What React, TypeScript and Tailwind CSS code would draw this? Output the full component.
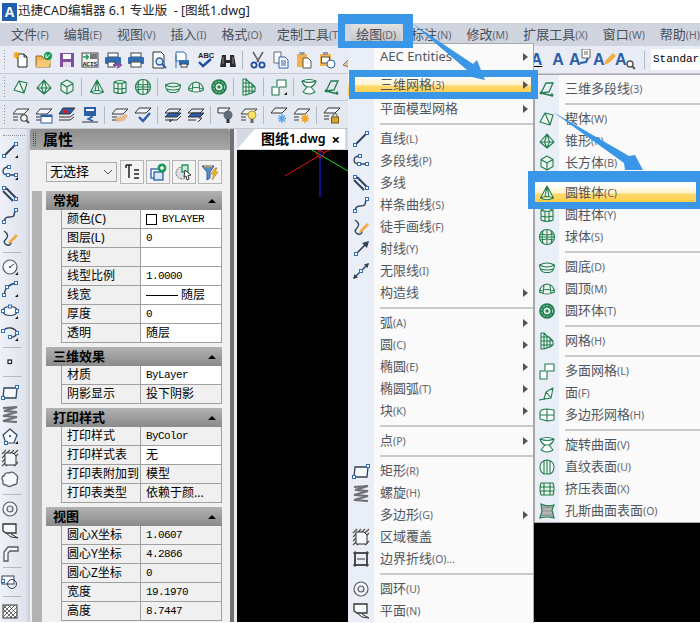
import React from 'react';

const grn = '#1f7d4d';
const ink = '#31425a';
const node = '#2f6db5';
const gry = '#555b66';

const N = ({ x, y }: { x: number; y: number }) => (
  <rect x={x - 1.5} y={y - 1.5} width="3" height="3" fill="#fff" stroke={node} strokeWidth="1" />
);
const Corner = () => <path d="M14 17h3v-3z" fill="#111" />;

// 三维 icons
const G = ({ d, fill = '#eef3ee' }: { d: string; fill?: string }) => (
  <path d={d} fill={fill} stroke={grn} strokeWidth="1.1" strokeLinejoin="round" />
);

// 图层 icon base: two stacked sheets
const Layers = ({ children }: { children?: React.ReactNode }) => (
  <>
    <path d="M5 3h12l-5 5H1z" fill="#f4f5f8" stroke="#3a3a3a" strokeWidth="1" />
    <path d="M1 11h5M1 14h5" stroke="#3a3a3a" strokeWidth="1" />
    {children}
  </>
);

const ICONS: Record<string, React.ReactNode> = {
  new: (
    <>
      <path d="M6 3h6l3 3v10H6z" fill="#fff" stroke="#222" />
      <path d="M12 3v3h3" fill="none" stroke="#222" />
      <path d="M1 4h7M4.500 1v7M2 1.500l5 5M7 1.500l-5 5" stroke="#f2a31d" strokeWidth="1.200" />
    </>
  ),
  open: (
    <>
      <path d="M1 5h6l1 2h7v9H1z" fill="#f2b04e" stroke="#8a6a30" />
      <path d="M1 16l2-7h13l-2 7z" fill="#f7c873" />
      <circle cx="13" cy="5" r="4.200" fill="#1d9a5a" />
      <path d="M11 3.500v3l2 0M12 6.500l3-3" stroke="#fff" fill="none" />
    </>
  ),
  save: (
    <>
      <rect x="2" y="2" width="14" height="14" fill="#7d4f9e" />
      <rect x="5" y="3" width="8" height="5" fill="#fff" />
      <rect x="5" y="11" width="8" height="5" fill="#e6dcef" />
    </>
  ),
  acis: (
    <>
      <rect x="1" y="2" width="16" height="14" fill="#f4f4f4" stroke="#444" />
      <rect x="9" y="3" width="7" height="5" fill="#777" />
      <path d="M2 6h5M5 3.500 7.500 6 5 8.500" stroke="#1d9a5a" fill="none" strokeWidth="1.400" />
      <text x="1.700" y="15" fontSize="6" fontWeight="700" fill="#222" fontFamily="Liberation Mono">ACIS</text>
    </>
  ),
  printto: (
    <>
      <rect x="4" y="2" width="10" height="4" fill="#fff" stroke="#444" />
      <rect x="1" y="6" width="16" height="7" rx="1" fill="#2f6db5" />
      <rect x="4" y="11" width="7" height="5" fill="#fff" stroke="#444" />
      <path d="M9 14h6M13 11l4 3-4 3" stroke="#7d4f9e" fill="none" strokeWidth="1.800" />
    </>
  ),
  print: (
    <>
      <rect x="4" y="2" width="10" height="4" fill="#fff" stroke="#444" />
      <rect x="1" y="6" width="16" height="7" rx="1" fill="#2f6db5" />
      <rect x="4" y="11" width="10" height="5" fill="#fff" stroke="#444" />
    </>
  ),
  preview: (
    <>
      <path d="M3 1h8l3 3v13H3z" fill="#fff" stroke="#333" />
      <circle cx="9.500" cy="10.500" r="3.500" fill="#d8e8f8" stroke="#2a5ea8" strokeWidth="1.400" />
      <path d="M12 13l4 4" stroke="#2a5ea8" strokeWidth="2" />
    </>
  ),
  setup: (
    <>
      <path d="M3 1h8l2 2v7H3z" fill="#fff" stroke="#2f6db5" />
      <path d="M3 4v13" stroke="#2f6db5" />
      <rect x="6" y="9" width="10" height="5" fill="#2f6db5" />
      <rect x="8" y="13" width="6" height="3" fill="#fff" stroke="#444" />
    </>
  ),
  spell: (
    <>
      <text x="2" y="7" fontSize="7.500" fontWeight="700" fill="#222" fontFamily="Liberation Sans">ABC</text>
      <path d="M3 11l4 4 8-7" stroke="#1e4f9e" strokeWidth="2.400" fill="none" />
    </>
  ),
  binoc: (
    <>
      <path d="M3 4h4v5h4V4h4l2 12h-6v-4H7v4H1z" fill="#2c2c2c" />
      <path d="M4 6v7M14 6v7" stroke="#888" />
    </>
  ),
  cut: (
    <>
      <path d="M4 1l6 10M14 1L8 11" stroke="#666" strokeWidth="1.600" />
      <circle cx="5" cy="14" r="2.600" fill="none" stroke="#1e4f9e" strokeWidth="1.800" />
      <circle cx="13" cy="14" r="2.600" fill="none" stroke="#1e4f9e" strokeWidth="1.800" />
    </>
  ),
  copy: (
    <>
      <path d="M2 1h7v11H2z" fill="#fff" stroke="#667" />
      <path d="M7 6h6l3 3v8H7z" fill="#fff" stroke="#2a5ea8" />
      <path d="M9 10h5M9 12h5M9 14h5" stroke="#2a5ea8" />
    </>
  ),
  paste: (
    <>
      <rect x="2" y="3" width="10" height="13" fill="#f2b04e" />
      <rect x="4.500" y="1" width="5" height="3" fill="#999" />
      <path d="M8 7h5l3 3v7H8z" fill="#fff" stroke="#555" />
    </>
  ),
  match: (
    <>
      <rect x="2" y="3" width="11" height="12" fill="#f2b04e" />
      <rect x="3.500" y="6" width="8" height="6" fill="#fff" stroke="#555" />
      <rect x="5" y="1" width="5" height="3" fill="#999" />
      <circle cx="13" cy="13" r="4" fill="#fff" stroke="#2a5ea8" />
    </>
  ),
  brush: <path d="M2 14l8-8 4 3-7 7z" fill="#d9c39a" stroke="#8a7a5a" />,

  wedge: <G d="M2 12 7 3l8 2-3 10zM2 12l10 3M7 3l5 12" />,
  pyramid: <G d="M9 2 2 10l7 6 7-6zM9 2 6.500 10 9 16M9 2l2.500 8L9 16M2 10h14" />,
  box: <G d="M9 2l6 3.500v7L9 16l-6-3.500v-7zM3 5.500 9 9l6-3.500M9 9v7" />,
  cone: <G d="M9 2 2.500 14Q9 17.500 15.500 14zM2.500 14Q9 11 15.500 14M9 2 7 13M9 2l2 11" />,
  cyl: <G d="M3 4q6-3 12 0v10q-6 3-12 0zM3 4q6 3 12 0M7 5v10M11 5v10M3 10q6 2 12 0" />,
  sphere: (
    <>
      <circle cx="9" cy="9" r="7.500" fill="#eef3ee" stroke={grn} strokeWidth="1.200" />
      <path d="M2 6q7 2 14 0M2 12q7-2 14 0M1.500 9h15M9 1.500v15M5 2.500q-2 6.500 0 13M13 2.500q2 6.500 0 13" fill="none" stroke={grn} />
    </>
  ),
  dish: <G d="M1.500 7Q9 3 16.500 7 16 14 11 14.500H7Q2 14 1.500 7zM1.500 7Q9 11 16.500 7M3 11q6 2 12 0" />,
  dome: <G d="M1.500 12Q2 5 9 4q7 1 7.500 8Q9 16 1.500 12zM1.500 11Q9 8 16.500 11M6 5 5 14M12 5l1 9" />,
  torus: (
    <>
      <circle cx="9" cy="9" r="7.800" fill={grn} />
      <circle cx="9" cy="9" r="5.500" fill="none" stroke="#bfe0cd" strokeDasharray="2 1.500" />
      <circle cx="9" cy="9" r="3" fill="#9fd0b4" stroke="#fff" />
      <circle cx="9" cy="9" r="1.300" fill={grn} />
    </>
  ),
  mesh: <G d="M3 1h3l3 3 3 2 3 3v4l-3 2-3 1-3 1H3zM6 1v16M9 4v12M12 6v9M3 5h9M3 9h12M3 13h12" fill="#f0f5f0" />,
  fmesh: (
    <>
      <G d="M2 9h7v8H2z" fill="#fff" />
      <G d="M7 9V2h9v7H9" fill="#fff" />
    </>
  ),
  fmeshc: (
    <>
      <G d="M2 9h7v8H2z" fill="#fff" />
      <G d="M7 9V2h9v7H9" fill="#fff" />
      <Corner />
    </>
  ),
  face: <G d="M1 16l5-1 2-7 7-4-2 10-7 1M8 8l5 6M1 16l12-2" fill="#fff" />,
  pmesh: <G d="M2 6q1-3 7-3l7 1v10l-7 1-7-2zM2 9h14M9 3v12" fill="#fff" />,
  rev: <G d="M2 3Q9 0 16 3q-1 4-5 6l4 5q-6 4-12 0l4-5Q3 7 2 3zM2 3q7 3 14 0M7 9h4" fill="#fff" />,
  poly3d: (
    <>
      <path d="M3 13 8 3h7l-4 9-8 1 12 3" fill="none" stroke={grn} strokeWidth="1.300" />
      <circle cx="3" cy="13" r="1.400" fill={grn} />
      <circle cx="14" cy="15" r="1.400" fill={grn} />
    </>
  ),
  ruled: <G d="M9 2q7 1 7 7 0 5-4 7H6Q2 14 2 9q0-6 7-7zM6 3v13M9 2v14M12 3v13" fill="#f4f8f4" />,
  extr: <G d="M3 3h12q2 6 0 12H3q-2-6 0-12zM6 3v12M12 3v12M2 7h14M2 11h14" fill="#e8f1ea" />,
  coons: (
    <>
      <path d="M3 2q6 3 13 1l-2 5 2 8q-7-2-14 0l2-7z" fill="#b4b8b8" stroke={grn} strokeWidth="1.200" />
      <path d="M4 6l10-1M4 9l10 0M3 13l11 0" stroke="#8c8c8c" />
    </>
  ),

  line: (
    <>
      <path d="M3 15 15 3" stroke={ink} strokeWidth="2" />
      <N x={3} y={15} />
      <N x={15} y={3} />
    </>
  ),
  linec: (
    <>
      <path d="M3 15 15 3" stroke={ink} strokeWidth="2" />
      <N x={3} y={15} />
      <N x={15} y={3} />
      <Corner />
    </>
  ),
  pline: (
    <>
      <path d="M8 4Q2 4 2 8t5 4h7" fill="none" stroke={ink} strokeWidth="1.300" />
      <N x={8} y={4} />
      <N x={7} y={12} />
      <N x={15} y={12} />
    </>
  ),
  plinec: (
    <>
      <path d="M8 4Q2 4 2 8t5 4h7" fill="none" stroke={ink} strokeWidth="1.300" />
      <N x={8} y={4} />
      <N x={7} y={12} />
      <N x={15} y={12} />
      <Corner />
    </>
  ),
  mline: (
    <>
      <path d="M2 6l10 10M5 3l10 10" stroke={ink} strokeWidth="2" />
      <N x={15} y={14} />
      <N x={3} y={3} />
    </>
  ),
  spline: (
    <>
      <path d="M3 16q0-6 5-6t5-2 2-5" fill="none" stroke={ink} strokeWidth="1.500" />
      <N x={3} y={15} />
      <N x={15} y={3} />
    </>
  ),
  free: (
    <>
      <path d="M3 2q6 4 2 8t1 6q4 1 4-3" fill="none" stroke={ink} strokeWidth="1.400" />
      <path d="M8 12l7-7 2 2-7 7-3 1z" fill="#f2ac45" />
    </>
  ),
  ray: (
    <>
      <path d="M4 14 14 4" stroke={ink} strokeWidth="1.600" />
      <path d="M17 1l-7 2 5 5z" fill={ink} />
      <N x={4} y={14} />
    </>
  ),
  xline: (
    <>
      <path d="M2 16 16 2" stroke={ink} strokeWidth="1.500" />
      <path d="M17 1l-5 1.500L15.500 6zM1 17l5-1.500L2.500 12z" fill={ink} />
      <N x={9} y={9} />
    </>
  ),
  circle: (
    <>
      <circle cx="9" cy="9" r="7" fill="#f8f9fc" stroke={gry} strokeWidth="1.200" />
      <path d="M9 9l4-3" stroke={ink} />
      <rect x="8" y="8" width="2" height="2" fill={node} />
      <Corner />
    </>
  ),
  arc: (
    <>
      <path d="M3 15Q4 5 15 3" fill="none" stroke={ink} strokeWidth="1.400" />
      <N x={3} y={15} />
      <N x={6} y={7} />
      <N x={15} y={3} />
      <Corner />
    </>
  ),
  ellipse: (
    <>
      <ellipse cx="9" cy="9" rx="7.500" ry="4.500" fill="#f8f9fc" stroke={ink} strokeWidth="1.200" />
      <N x={9} y={4.500} />
      <N x={2} y={9} />
      <N x={16} y={9} />
      <Corner />
    </>
  ),
  earc: (
    <>
      <path d="M2 7q3-4 8-3t6 5q-2 5-7 4" fill="none" stroke={ink} strokeWidth="1.300" />
      <N x={2} y={7} />
      <N x={16} y={9} />
      <N x={9} y={13} />
      <Corner />
    </>
  ),
  point: <rect x="7" y="7" width="3.500" height="3.500" fill="#fff" stroke="#222" strokeWidth="1.200" />,
  rect: (
    <>
      <path d="M3 5h13l-1 10H2z" fill="#f8f9fc" stroke={ink} strokeWidth="1.300" />
      <N x={16} y={4} />
      <N x={2} y={15} />
    </>
  ),
  helix: <path d="M2 3l14-1-13 4 13 1-14 4 14 1-14 4 14 1" fill="none" stroke="#6e7176" strokeWidth="2.200" />,
  polygon: (
    <>
      <path d="M9 2l7 6-3 8H5L2 8z" fill="#f8f9fc" stroke={ink} strokeWidth="1.200" />
      <rect x="8" y="8" width="2" height="2" fill={node} />
      <N x={5} y={16} />
      <Corner />
    </>
  ),
  wipe: (
    <>
      <path d="M1 5l4-4M1 9l8-8M1 13 13 1M1 17 17 1M5 17 17 5M13 17l4-4" stroke="#555" strokeWidth="1.300" />
      <path d="M4 4h8l3 3v9H4z" fill="#f4f6fb" stroke="#333" />
    </>
  ),
  bound: (
    <>
      <rect x="3" y="3" width="12" height="12" fill="none" stroke="#333" strokeWidth="1.400" />
      <path d="M1 3h16M1 15h16M3 1v16M15 1v16M5 9h8" stroke="#333" />
    </>
  ),
  cloud: <path d="M3 5q1-4 5-3 4-2 6 1 4 2 2 6 1 5-4 5-4 3-7 0-4 0-3-4-2-3 0-5z" fill="#f8f9fc" stroke={gry} strokeWidth="1.300" />,
  donut: (
    <>
      <circle cx="9" cy="9" r="7" fill="#f8f9fc" stroke={gry} strokeWidth="1.200" />
      <circle cx="9" cy="9" r="3" fill="#e8e8e8" stroke={gry} strokeWidth="1.200" />
    </>
  ),
  plane: (
    <>
      <path d="M2 2h13v9H5l-3-2z" fill="#f8f9fc" stroke="#333" strokeWidth="1.300" />
      <path d="M5 11l5 4 7 1-7-4" fill="none" stroke="#333" />
    </>
  ),
  pipe: <path d="M3 17V8l4-5h10v4H9L7 9v8z" fill="#f4f6fb" stroke={gry} strokeWidth="1.300" />,
  region: (
    <>
      <rect x="1" y="3" width="12" height="8" fill="#f8f9fc" stroke={ink} />
      <circle cx="11" cy="11" r="4.500" fill="none" stroke={ink} />
      <N x={2} y={8} />
    </>
  ),
  hatch: (
    <>
      <rect x="2" y="3" width="14" height="13" fill="#fff" stroke="#333" />
      <path d="M2 7l4-4M2 11l8-8M2 15 14 3M5 16 16 5M9 16l7-7M13 16l3-3M2 7l9 9M2 3l13 13M7 3l9 9" stroke="#444" strokeWidth=".8" />
    </>
  ),

  lfind: (
    <Layers>
      <circle cx="12" cy="12" r="3.200" fill="#fff" stroke="#555" strokeWidth="1.300" />
      <path d="M14 14l3 3" stroke="#555" strokeWidth="2" />
    </Layers>
  ),
  lwin: (
    <Layers>
      <rect x="6" y="9" width="11" height="8" fill="#fff" stroke="#2a5ea8" />
      <rect x="6" y="9" width="11" height="2" fill="#2a5ea8" />
    </Layers>
  ),
  lred: (
    <>
      <path d="M5 2h12l-5 6H1z" fill="#2a5ea8" stroke="#333" />
      <rect x="6" y="4" width="3" height="3" fill="#e31818" />
      <path d="M1 11h11l4-3M1 14h11l4-3" stroke="#333" fill="none" />
    </>
  ),
  lmon: (
    <>
      <rect x="3" y="1" width="12" height="9" fill="#2a5ea8" />
      <rect x="5" y="3" width="8" height="2" fill="#fff" />
      <path d="M8 8l3 3-4 2 5 2" stroke="#2a5ea8" strokeWidth="1.600" fill="none" />
      <path d="M1 16h16" stroke="#333" />
    </>
  ),
  lhand: (
    <Layers>
      <path d="M4 12l4-1 6-3 3 2-4 5-6 1z" fill="#e8b98a" />
    </Layers>
  ),
  lchk: (
    <>
      <path d="M5 2h12l-5 5H1z" fill="#f4f5f8" stroke="#333" />
      <path d="M5 11l4 4 7-8" stroke="#2a5ea8" strokeWidth="2.400" fill="none" />
    </>
  ),
  lprev: (
    <>
      <path d="M5 3h12l-4 4H1zM1 14h12l4-4" fill="none" stroke="#333" />
      <path d="M5 7h12l-4 4H1z" fill="#2a5ea8" stroke="#333" />
      <path d="M9 13l-3 3v-3" stroke="#333" fill="none" />
    </>
  ),
  lnext: (
    <>
      <path d="M5 3h12l-4 4H1zM1 14h8" fill="none" stroke="#333" />
      <path d="M5 7h12l-4 4H1z" fill="#2a5ea8" stroke="#333" />
      <path d="M11 16l4-4h-3" stroke="#333" fill="none" />
    </>
  ),
  lbulb0: (
    <>
      <path d="M1 2h12L9 7H1z" fill="#f4f5f8" stroke="#333" />
      <circle cx="11" cy="9" r="4.500" fill="#5f6b78" />
      <rect x="9.500" y="13" width="3" height="4" fill="#333" />
    </>
  ),
  lbulb1: (
    <Layers>
      <circle cx="12" cy="9" r="4" fill="#f8e26a" stroke="#b59a2d" />
      <rect x="10.500" y="13" width="3" height="4" fill="#666" />
    </Layers>
  ),
  lsnow: (
    <>
      <path d="M5 2h12l-5 5H1z" fill="#f4f5f8" stroke="#333" />
      <path d="M12 8v9M8 12.500h8M9 9.500l6 6M15 9.500l-6 6" stroke="#62a8e8" strokeWidth="1.500" />
    </>
  ),
  lsun: (
    <Layers>
      <path d="M12 8v9M8 12.500h8M9 9.500l6 6M15 9.500l-6 6" stroke="#f2a31d" strokeWidth="1.600" />
    </Layers>
  ),
  llock: (
    <>
      <path d="M5 2h12l-5 5H1zM1 10h5M1 13h5" fill="#f4f5f8" stroke="#333" />
      <path d="M10 11V9q2-3 4 0v2" fill="none" stroke="#777" strokeWidth="1.300" />
      <rect x="8.500" y="11" width="7" height="6" fill="#d9a52f" stroke="#7a5d17" />
    </>
  ),

  props1: <path d="M3 2h6M6 2v13M3 2v3M11 7h5M11 11h5M11 15h5" stroke="#222" strokeWidth="1.500" fill="none" />,
  props2: (
    <>
      <rect x="2" y="6" width="9" height="9" fill="#fff" stroke="#2a5ea8" strokeWidth="1.300" />
      <rect x="5" y="9" width="9" height="8" fill="#dbe6f4" stroke="#2a5ea8" strokeWidth="1.300" />
      <circle cx="13" cy="5" r="4.500" fill="#1d9a5a" />
      <path d="M11 5h4M13 3v4" stroke="#fff" strokeWidth="1.500" />
    </>
  ),
  props3: (
    <>
      <circle cx="7" cy="10" r="6" fill="#d8dde6" stroke="#667" strokeDasharray="2 1" />
      <path d="M7 2h6v7H7z" fill="#cfe6d8" stroke="#1d9a5a" strokeWidth="1.300" />
      <path d="M10 7l6 5-3 .5L14 16l-2 1-1-4-2 1z" fill="#fff" stroke="#333" />
    </>
  ),
  props4: (
    <>
      <path d="M1 3h12L9 9v6l-3 2V9z" fill="#5d8ec4" stroke="#2a5ea8" />
      <path d="M3 3.500h8" stroke="#e2a32d" strokeWidth="1.300" />
      <path d="M14 5l-4 6h3l-2 6 6-8h-3l2-4z" fill="#f2b62d" stroke="#a57a12" strokeWidth=".6" />
    </>
  ),
};

const Icon = ({ n, s = 18 }: { n: string; s?: number }) => (
  <svg width={s} height={s} viewBox="0 0 18 18" className="shrink-0">
    {ICONS[n]}
  </svg>
);

const Label = ({ t, k }: { t: string; k?: string }) => (
  <span className="whitespace-nowrap">
    {t}
    {k && <span className="text-[10.500px] text-[#5f6672]">{k}</span>}
  </span>
);

const hiRow = 'bg-[linear-gradient(to_bottom,#fff_12%,#fff2c9_50%,#ffd96e_54%,#ffcf48_90%)]';

const TOP_MENU: [string, string][] = [
  ['文件', '(F)'], ['编辑', '(E)'], ['视图', '(V)'], ['插入', '(I)'], ['格式', '(O)'], ['定制工具', '(T)'],
  ['绘图', '(D)'], ['标注', '(N)'], ['修改', '(M)'], ['扩展工具', '(X)'], ['窗口', '(W)'], ['帮助', '(H)'],
];

const Tb = ({ items }: { items: string[] }) => (
  <>
    {items.map((n, i) =>
      n === '|' ? (
        <div key={i} className="mx-[3px] h-[18px] w-px bg-[#b4b9c4]" />
      ) : (
        <div key={i} className="flex w-[23px] justify-center">
          <Icon n={n} />
        </div>
      ),
    )}
  </>
);

const HGrip = () => (
  <div className="mr-[2px] flex h-[22px] w-[3px] flex-col justify-between py-px">
    {[0, 1, 2, 3, 4, 5, 6].map((d) => (
      <div key={d} className="h-px w-px bg-[#8d929c]" />
    ))}
  </div>
);

const ROW1 = ['new', 'open', 'save', 'acis', 'printto', 'print', 'preview', 'setup', 'spell', 'binoc', '|', 'cut', 'copy', 'paste', 'match', 'brush'];
const ROW2 = ['wedge', 'pyramid', 'box', '|', 'cone', 'cyl', 'sphere', '|', 'dish', 'dome', 'torus', '|', 'mesh', '|', 'fmeshc', '|', 'rev', 'poly3d'];
const ROW3 = ['lfind', 'lwin', 'lred', 'lmon', '|', 'lhand', 'lchk', '|', 'lprev', 'lnext', '|', 'lbulb0', 'lbulb1', '|', 'lsnow', 'lsun', '|', 'llock'];

const LEFT = ['linec', 'plinec', 'mline', 'spline', 'free', '|', 'circle', 'arc', 'ellipse', 'earc', '|', 'point', '|', 'rect', 'helix', 'polygon', 'wipe', 'cloud', '|', 'donut', 'plane', 'pipe', '|', 'region', '|', 'hatch'];

type Prop = { k: string; v?: React.ReactNode; white?: boolean; mono?: boolean };

const SECTIONS: { title: string; rows: Prop[] }[] = [
  {
    title: '常规',
    rows: [
      {
        k: '颜色(C)',
        white: true,
        v: (
          <span className="flex items-center gap-[5px]">
            <span className="h-[11px] w-[11px] border border-black bg-white" />
            <span className="font-['Liberation_Mono',monospace] text-[11px] tracking-[-0.6px]">BYLAYER</span>
          </span>
        ),
      },
      { k: '图层(L)', v: '0', white: true, mono: true },
      { k: '线型', white: true },
      { k: '线型比例', v: '1.0000', white: true, mono: true },
      {
        k: '线宽',
        white: true,
        v: (
          <span className="flex items-center gap-[3px]">
            <span className="h-px w-[32px] bg-black" />
            随层
          </span>
        ),
      },
      { k: '厚度', v: '0', white: true, mono: true },
      { k: '透明', v: '随层', white: true },
    ],
  },
  {
    title: '三维效果',
    rows: [
      { k: '材质', v: 'ByLayer', white: true, mono: true },
      { k: '阴影显示', v: '投下阴影' },
    ],
  },
  {
    title: '打印样式',
    rows: [
      { k: '打印样式', v: 'ByColor', mono: true },
      { k: '打印样式表', v: '无', white: true },
      { k: '打印表附加到', v: '模型' },
      { k: '打印表类型', v: '依赖于颜...' },
    ],
  },
  {
    title: '视图',
    rows: [
      { k: '圆心X坐标', v: '1.0607', mono: true },
      { k: '圆心Y坐标', v: '4.2866', mono: true },
      { k: '圆心Z坐标', v: '0', mono: true },
      { k: '宽度', v: '19.1970', mono: true },
      { k: '高度', v: '8.7447', mono: true },
    ],
  },
];

type Item = { t?: string; k?: string; i?: string; sub?: boolean; hi?: boolean; sep?: boolean; sp?: number };

const MAIN: Item[] = [
  { t: 'AEC Entities', sub: true },
  { sp: 6 },
  { t: '三维网格', k: '(3)', sub: true, hi: true },
  { sp: 2 },
  { t: '平面模型网格', sub: true },
  { sep: true },
  { t: '直线', k: '(L)', i: 'line' },
  { t: '多段线', k: '(P)', i: 'pline' },
  { t: '多线', i: 'mline' },
  { t: '样条曲线', k: '(S)', i: 'spline' },
  { t: '徒手画线', k: '(F)', i: 'free' },
  { t: '射线', k: '(Y)', i: 'ray' },
  { t: '无限线', k: '(I)', i: 'xline' },
  { t: '构造线', sub: true },
  { sep: true },
  { t: '弧', k: '(A)', sub: true },
  { t: '圆', k: '(C)', sub: true },
  { t: '椭圆', k: '(E)', sub: true },
  { t: '椭圆弧', k: '(T)', sub: true },
  { t: '块', k: '(K)', sub: true },
  { sep: true },
  { t: '点', k: '(P)', sub: true },
  { sep: true },
  { t: '矩形', k: '(R)', i: 'rect' },
  { t: '螺旋', k: '(H)', i: 'helix' },
  { t: '多边形', k: '(G)', sub: true },
  { t: '区域覆盖', i: 'wipe' },
  { t: '边界折线', k: '(O)...', i: 'bound' },
  { sep: true },
  { t: '圆环', k: '(U)', i: 'donut' },
  { t: '平面', k: '(N)', i: 'plane' },
];

const SUB: Item[] = [
  { sp: 3 },
  { t: '三维多段线', k: '(3)', i: 'poly3d' },
  { sep: true },
  { t: '楔体', k: '(W)', i: 'wedge' },
  { t: '锥形', k: '(P)', i: 'pyramid' },
  { t: '长方体', k: '(B)', i: 'box' },
  { sep: true },
  { t: '圆锥体', k: '(C)', i: 'cone', hi: true },
  { t: '圆柱体', k: '(Y)', i: 'cyl' },
  { t: '球体', k: '(S)', i: 'sphere' },
  { sep: true },
  { t: '圆底', k: '(D)', i: 'dish' },
  { t: '圆顶', k: '(M)', i: 'dome' },
  { t: '圆环体', k: '(T)', i: 'torus' },
  { sep: true },
  { t: '网格', k: '(H)', i: 'mesh' },
  { sep: true },
  { t: '多面网格', k: '(L)', i: 'fmesh' },
  { t: '面', k: '(F)', i: 'face' },
  { t: '多边形网格', k: '(H)', i: 'pmesh' },
  { sep: true },
  { t: '旋转曲面', k: '(V)', i: 'rev' },
  { t: '直纹表面', k: '(U)', i: 'ruled' },
  { t: '挤压表面', k: '(X)', i: 'extr' },
  { t: '孔斯曲面表面', k: '(O)', i: 'coons' },
];

const MenuList = ({ items, gutter }: { items: Item[]; gutter: string }) => (
  <>
    {items.map((m, idx) => {
      if (m.sp) return <div key={idx} className="flex" style={{ height: m.sp }}><div className={`${gutter} bg-[#e9eef7]`} /></div>;
      if (m.sep)
        return (
          <div key={idx} className="flex h-[8px] items-center">
            <div className={`${gutter} h-full shrink-0 bg-[#e9eef7]`} />
            <div className="ml-[6px] h-[2px] flex-1 bg-[#c9c9c9]" />
          </div>
        );
      return (
        <div key={idx} className={`flex h-[22px] items-center text-[13px] text-[#50565f] ${m.hi ? hiRow : ''}`}>
          <div className={`${gutter} flex h-full shrink-0 items-center justify-center ${m.hi ? '' : 'bg-[#e9eef7]'}`}>
            {m.i && <Icon n={m.i} />}
          </div>
          <div className="ml-[6px] flex-1">
            <Label t={m.t || ''} k={m.k} />
          </div>
          {m.sub && <div className="mr-[5px] h-0 w-0 border-y-[4.500px] border-l-[5px] border-y-transparent border-l-[#555]" />}
        </div>
      );
    })}
  </>
);

const App: React.FC = () => {
  return (
    <div className="relative h-[623px] w-[700px] overflow-hidden bg-white font-['Noto_Sans','Noto_Sans_CJK_SC',sans-serif] text-black">
      {/* 标题栏 */}
      <div className="flex h-[23px] items-center pl-[2px] text-[12.500px] leading-none text-[#222]">
        <div className="mr-px flex h-[18px] w-[15px] items-center justify-center bg-[#1f5fae] font-['Liberation_Sans',sans-serif] text-[14px] font-bold text-white">A</div>
        <span className="whitespace-pre">迅捷CAD编辑器 6.1 专业版  - [图纸1.dwg]</span>
      </div>

      {/* 菜单栏 */}
      <div className="flex h-[23px] items-center gap-[15px] bg-[#cfd4df] pl-[11px] text-[13px] text-[#4a4f58]">
        {TOP_MENU.map(([t, k]) => (
          <div
            key={t}
            className={`flex h-full items-center whitespace-nowrap ${t === '绘图' ? '-mx-[5px] bg-[linear-gradient(to_bottom,#e4e4e4,#bcbcbc)] px-[5px]' : ''}`}
          >
            <Label t={t} k={k} />
          </div>
        ))}
      </div>

      {/* 工具栏 */}
      <div className="flex h-[28px] items-center border-b border-[#c3c8d3] bg-[#e9ecf4] pl-[4px]">
        <HGrip />
        <Tb items={ROW1} />
        <div className="ml-auto flex items-center font-['Liberation_Sans',sans-serif] text-[16px] font-bold leading-none text-[#2a5ea8]">
          <span className="w-[21px] text-center underline decoration-black">A</span>
          <span className="w-[22px] text-center">A</span>
          <span className="relative w-[24px] text-left">
            A
            <svg className="absolute right-[1px] -top-[3px]" width="13" height="16" viewBox="0 0 13 16">
              <path d="M3 0h8v9H3z" fill="#fff" stroke="#666" />
              <path d="M5 3h4M5 5h4" stroke="#666" />
              <path d="M1 14l6-1 2-4" fill="none" stroke="#2a5ea8" strokeWidth="2" />
            </svg>
          </span>
          <span className="relative w-[22px] text-left">
            A
            <svg className="absolute -right-[2px] -top-[1px]" width="14" height="16" viewBox="0 0 14 16">
              <path d="M1 14l2-5 7-7 3 3-7 7z" fill="#f2ac45" />
            </svg>
          </span>
          <span className="relative w-[22px] text-left">
            A
            <svg className="absolute -bottom-[2px] right-[1px]" width="10" height="10" viewBox="0 0 10 10">
              <circle cx="4" cy="4" r="3" fill="#fff" stroke="#555" strokeWidth="1.400" />
              <path d="M6 6l3 3" stroke="#555" strokeWidth="1.800" />
            </svg>
          </span>
          <div className="ml-[7px] mr-[6px] h-[18px] w-px bg-[#b4b9c4]" />
          <div className="flex h-[21px] w-[49px] items-center overflow-hidden bg-white pl-[2px] font-['Liberation_Mono',monospace] text-[11px] font-normal text-black">
            Standard
          </div>
        </div>
      </div>
      <div className="flex h-[27px] items-center border-b border-[#c3c8d3] bg-[#e4e8f1] pl-[4px]">
        <HGrip />
        <Tb items={ROW2} />
      </div>
      <div className="flex h-[28px] items-center border-b border-[#c3c8d3] bg-[#e4e8f1] pl-[4px]">
        <HGrip />
        <Tb items={ROW3} />
      </div>

      {/* 主体 */}
      <div className="flex h-[493px]">
        {/* 左侧绘图工具条 */}
        <div className="flex w-[30px] shrink-0 flex-col bg-[linear-gradient(to_right,#eef1f7,#dfe3ed_85%,#c6cbd6)]">
          <div className="mx-[3px] mt-[6px] mb-[3px] h-px w-[22px] border-t border-dotted border-[#8d929c]" />
          {LEFT.map((n, i) =>
            n === '|' ? (
              <div key={i} className="flex h-[8px] items-center">
                <div className="ml-[3px] h-px w-[19px] bg-[#b4b9c4]" />
              </div>
            ) : (
              <div key={i} className="flex h-[22px] shrink-0 items-center pl-[1px]">
                <Icon n={n} />
              </div>
            ),
          )}
        </div>

        {/* 属性面板 */}
        <div className="flex w-[200px] shrink-0 flex-col bg-[#f0f0f0]">
          <div className="flex h-[21px] shrink-0 items-center rounded-t-[2px] bg-[linear-gradient(to_bottom,#8f8f8f,#a8a8a8)] pl-[3px]">
            <div className="mr-[7px] h-[13px] w-[3px] border-x border-dotted border-[#444]" />
            <span className="text-[15px] font-bold leading-none text-black">属性</span>
          </div>
          <div className="mt-[10px] flex h-[24px] items-center gap-[2px] pl-[16px]">
            <div className="mr-[1px] flex h-[20px] w-[71px] items-center justify-between border border-[#aaa] bg-[#f0f0f0] pl-[3px] pr-[3px] text-[13px]">
              无选择
              <svg width="10" height="6" viewBox="0 0 10 6">
                <path d="M1 1l4 4 4-4" fill="none" stroke="#555" />
              </svg>
            </div>
            {['props1', 'props2', 'props3', 'props4'].map((n) => (
              <div key={n} className="flex h-[24px] w-[24px] items-center justify-center border border-[#b5b5b5] bg-[#f3f3f3]">
                <Icon n={n} />
              </div>
            ))}
          </div>
          <div className="mt-[7px] flex flex-1 overflow-hidden pl-[2px]">
            <div className="mr-[4px] w-[10px] shrink-0 bg-[#b3b3b3]" />
            <div className="w-[176px]">
              {SECTIONS.map((sec) => (
                <div key={sec.title} className="mb-[4px]">
                  <div className="flex h-[19px] items-center justify-between bg-[linear-gradient(to_bottom,#b2b2b2,#8a8a8a)] pl-[7px] pr-[6px]">
                    <span className="text-[13px] font-bold leading-none text-black">{sec.title}</span>
                    <span className="h-0 w-0 border-x-[4px] border-b-[4px] border-x-transparent border-b-black" />
                  </div>
                  <div className="ml-[15px] border-x border-[#a0a0a0]">
                    {sec.rows.map((r) => (
                      <div key={r.k} className="flex h-[19px] border-b border-[#a0a0a0] text-[12px] leading-none">
                        <div className="flex w-[79px] shrink-0 items-center whitespace-nowrap border-r border-[#a0a0a0] pl-[5px]">{r.k}</div>
                        <div
                          className={`flex flex-1 items-center whitespace-nowrap pl-[5px] ${r.white ? 'bg-white' : ''} ${r.mono ? "font-['Liberation_Mono',monospace] text-[11px] tracking-[-0.6px]" : ''}`}
                        >
                          {r.v}
                        </div>
                      </div>
                    ))}
                  </div>
                </div>
              ))}
            </div>
          </div>
        </div>
        <div className="w-[4px] shrink-0 bg-[#707070]" />
        <div className="w-[3px] shrink-0 bg-[#e8eaf0]" />

        {/* 绘图区 */}
        <div className="flex flex-1 flex-col">
          <div className="flex h-[21px] shrink-0 bg-[#d5d9e2]">
            <div className="flex h-[20px] w-[108px] items-center whitespace-nowrap bg-white pl-[24px] pr-[5px] [clip-path:polygon(18px_0,100%_0,100%_100%,0_100%)]">
              <span className="text-[14px] font-bold leading-none">图纸</span>
              <span className="text-[12.500px] font-semibold leading-none">1.dwg</span>
              <span className="ml-auto text-[15px] font-bold leading-none">×</span>
            </div>
          </div>
          <div className="flex-1 bg-black">
            <svg width="120" height="60" viewBox="237 151 120 60">
              <path d="M320 156 285 177" stroke="#f01010" />
              <path d="M312 151 348 172" stroke="#10e010" />
              <path d="M320 151V198" stroke="#2020ff" />
              <circle cx="320" cy="155" r="3.500" fill="none" stroke="#f01010" />
              <path d="M323 154l7-3" stroke="#f01010" />
            </svg>
          </div>
        </div>
      </div>

      {/* 绘图 下拉菜单 */}
      <div className="absolute left-[348px] top-[43px] h-[580px] w-[186px] border-r border-t border-[#a9a9a9] bg-[#fafafa] pt-[2px]">
        <MenuList items={MAIN} gutter="w-[26px]" />
      </div>

      {/* 三维网格 子菜单 */}
      <div className="absolute left-[534px] top-[74px] h-[449px] w-[166px] border-b border-l border-t border-[#a9a9a9] bg-[#fafafa]">
        <MenuList items={SUB} gutter="w-[24px]" />
      </div>

      {/* 蓝色标注框 */}
      <div className="pointer-events-none absolute left-[338px] top-[14px] h-[34px] w-[75px] border-b-[7px] border-l-[7px] border-r-[10px] border-t-[10px] border-[#3a96e6]" />
      <div className="pointer-events-none absolute left-[349px] top-[70px] h-[29px] w-[189px] border-y-[7px] border-l-[6px] border-r-[7px] border-[#3a96e6]" />
      <div className="pointer-events-none absolute left-[528px] top-[171px] h-[38px] w-[172px] border-b-[7px] border-l-[7px] border-r-[4px] border-t-[11px] border-[#3a96e6]" />

      {/* 箭头 */}
      <svg className="pointer-events-none absolute left-[410px] top-[20px]" width="80" height="65" viewBox="410 20 80 65">
        <path d="M413 24 473 64 477 60 485 80 463 75 467 70z" fill="#3a96e6" />
      </svg>
      <svg className="pointer-events-none absolute left-[550px] top-[108px]" width="96" height="66" viewBox="550 108 96 66">
        <path d="M553 112 629 156 635 155 643 170 625 170 624 163z" fill="#3a96e6" />
      </svg>
    </div>
  );
};

export default App;
